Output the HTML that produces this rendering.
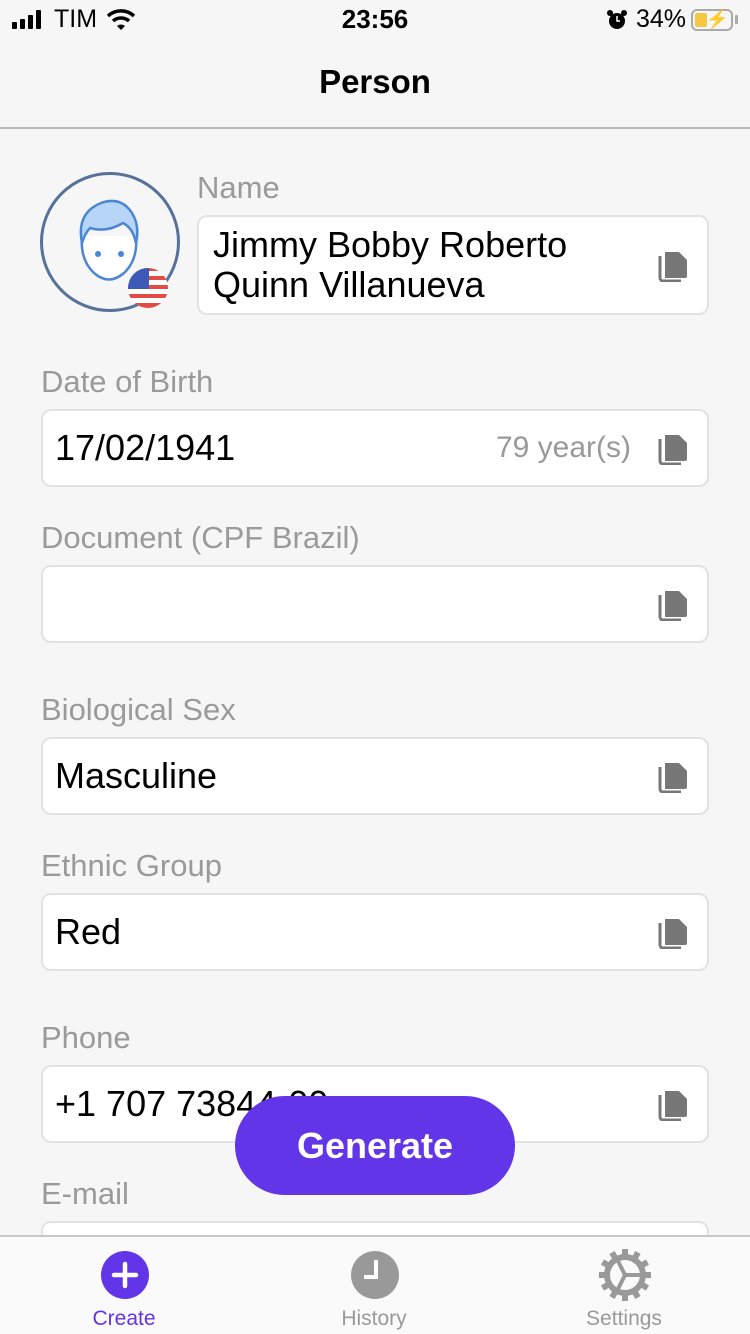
<!DOCTYPE html>
<html><head><meta charset="utf-8"><style>
*{margin:0;padding:0;box-sizing:border-box}
body{width:750px;height:1334px;background:#f6f6f6;font-family:"Liberation Sans",sans-serif;position:relative;overflow:hidden}
.abs{position:absolute}
.lbl{position:absolute;left:41px;font-size:31px;color:#9a9a9a}
.box{position:absolute;left:41px;width:668px;height:78px;background:#fff;border:2px solid #e2e2e2;border-radius:10px}
.val{position:absolute;left:12px;top:50%;transform:translateY(-50%);font-size:36px;color:#000;white-space:nowrap}
.cp{position:absolute;right:18px;top:50%;transform:translateY(-50%)}
</style></head><body>
<div class="abs" style="left:12px;top:10px;display:flex;align-items:flex-end;gap:3px;height:19px">
<div style="width:5px;height:7px;background:#000;border-radius:1px"></div>
<div style="width:5px;height:10px;background:#000;border-radius:1px"></div>
<div style="width:5px;height:14px;background:#000;border-radius:1px"></div>
<div style="width:5px;height:19px;background:#000;border-radius:1px"></div>
</div>
<div class="abs" style="left:54px;top:5px;font-size:25px">TIM</div>
<svg class="abs" style="left:106px;top:8px" width="30" height="22" viewBox="0 0 30 22"><path d="M2 8 A19 19 0 0 1 28 8" stroke="#000" stroke-width="3.5" fill="none"/><path d="M7 13 A12 12 0 0 1 23 13" stroke="#000" stroke-width="3.5" fill="none"/><path d="M11 18 L15 22 L19 18 A6 6 0 0 0 11 18Z" fill="#000"/></svg>
<div class="abs" style="left:0;width:750px;text-align:center;top:4px;font-size:26px;font-weight:bold">23:56</div>
<svg class="abs" style="left:606px;top:9px" width="22" height="22" viewBox="0 0 22 22"><circle cx="11" cy="12" r="8" fill="#000"/><circle cx="4" cy="4" r="3" fill="#000"/><circle cx="18" cy="4" r="3" fill="#000"/><path d="M11 7v5h3" stroke="#fff" stroke-width="1.5" fill="none"/></svg>
<div class="abs" style="left:636px;top:5px;font-size:25px">34%</div>
<div class="abs" style="left:691px;top:9px;width:42px;height:22px;border:2px solid #aaa;border-radius:6px"><div style="position:absolute;left:2px;top:2px;width:12px;height:14px;background:#f5c842;border-radius:2px"></div><div style="position:absolute;left:13px;top:-2px;font-size:18px;font-weight:bold">⚡</div></div>
<div class="abs" style="left:735px;top:15px;width:3px;height:9px;background:#aaa;border-radius:1px"></div>
<div class="abs" style="left:0;top:63px;width:750px;text-align:center;font-size:33px;font-weight:bold">Person</div>
<div class="abs" style="left:0;top:127px;width:750px;height:2px;background:#bdbdbd"></div>
<div class="abs" style="left:40px;top:172px;width:140px;height:140px;border:3px solid #56729a;border-radius:50%;background:#f6f6f6"></div>
<svg class="abs" style="left:76px;top:198px" width="66" height="88" viewBox="0 0 66 88">
<path d="M6 38 Q4 62 18 75 Q33 88 48 75 Q62 62 60 38" fill="#fff" stroke="#4b86d3" stroke-width="2.5"/>
<path d="M6 45 Q0 15 25 5 Q45 -2 56 15 Q64 28 60 45 Q57 30 47 25 Q30 35 14 30 Q9 35 6 45Z" fill="#b7d6f7" stroke="#4b86d3" stroke-width="2.5"/>
<circle cx="22" cy="56" r="3" fill="#4b86d3"/><circle cx="45" cy="56" r="3" fill="#4b86d3"/></svg>
<svg class="abs" style="left:127px;top:267px" width="42" height="42" viewBox="0 0 42 42"><defs><clipPath id="c"><circle cx="21" cy="21" r="20"/></clipPath></defs><g clip-path="url(#c)"><rect width="42" height="42" fill="#fff"/><rect y="0" width="42" height="4" fill="#e34b44"/><rect y="9" width="42" height="4" fill="#e34b44"/><rect y="18" width="42" height="4" fill="#e34b44"/><rect y="27" width="42" height="4" fill="#e34b44"/><rect y="36" width="42" height="5" fill="#e34b44"/><rect width="22" height="22" fill="#3d5ab8"/></g></svg>
<div class="abs" style="left:197px;top:170px;font-size:31px;color:#9a9a9a">Name</div>
<div class="box" style="left:197px;width:512px;top:215px;height:100px"><div class="val" style="line-height:40px;left:14px">Jimmy Bobby Roberto<br>Quinn Villanueva</div><svg class="cp" width="32" height="34" viewBox="0 0 32 34"><path d="M8 4h14l8 8v16a2 2 0 0 1-2 2H8z" fill="#777"/><path d="M3 8v22a3 3 0 0 0 3 3h18" stroke="#777" stroke-width="3" fill="none"/></svg></div>
<div class="lbl" style="top:364px">Date of Birth</div>
<div class="box" style="top:409px"><div class="val">17/02/1941</div><div class="abs" style="right:76px;top:50%;transform:translateY(-50%);font-size:30px;color:#999">79 year(s)</div><svg class="cp" width="32" height="34" viewBox="0 0 32 34"><path d="M8 4h14l8 8v16a2 2 0 0 1-2 2H8z" fill="#777"/><path d="M3 8v22a3 3 0 0 0 3 3h18" stroke="#777" stroke-width="3" fill="none"/></svg></div>
<div class="lbl" style="top:520px">Document (CPF Brazil)</div>
<div class="box" style="top:565px"><svg class="cp" width="32" height="34" viewBox="0 0 32 34"><path d="M8 4h14l8 8v16a2 2 0 0 1-2 2H8z" fill="#777"/><path d="M3 8v22a3 3 0 0 0 3 3h18" stroke="#777" stroke-width="3" fill="none"/></svg></div>
<div class="lbl" style="top:692px">Biological Sex</div>
<div class="box" style="top:737px"><div class="val">Masculine</div><svg class="cp" width="32" height="34" viewBox="0 0 32 34"><path d="M8 4h14l8 8v16a2 2 0 0 1-2 2H8z" fill="#777"/><path d="M3 8v22a3 3 0 0 0 3 3h18" stroke="#777" stroke-width="3" fill="none"/></svg></div>
<div class="lbl" style="top:848px">Ethnic Group</div>
<div class="box" style="top:893px"><div class="val">Red</div><svg class="cp" width="32" height="34" viewBox="0 0 32 34"><path d="M8 4h14l8 8v16a2 2 0 0 1-2 2H8z" fill="#777"/><path d="M3 8v22a3 3 0 0 0 3 3h18" stroke="#777" stroke-width="3" fill="none"/></svg></div>
<div class="lbl" style="top:1020px">Phone</div>
<div class="box" style="top:1065px"><div class="val">+1 707 73844-00</div><svg class="cp" width="32" height="34" viewBox="0 0 32 34"><path d="M8 4h14l8 8v16a2 2 0 0 1-2 2H8z" fill="#777"/><path d="M3 8v22a3 3 0 0 0 3 3h18" stroke="#777" stroke-width="3" fill="none"/></svg></div>
<div class="lbl" style="top:1176px">E-mail</div>
<div class="box" style="top:1221px"></div>
<div class="abs" style="left:235px;top:1096px;width:280px;height:99px;border-radius:50px;background:#6236e8;color:#fff;font-size:36px;font-weight:bold;text-align:center;line-height:99px">Generate</div>
<div class="abs" style="left:0;top:1235px;width:750px;height:99px;background:#fafafa;border-top:2px solid #c8c8c8"></div>
<svg class="abs" style="left:100px;top:1250px" width="50" height="50" viewBox="0 0 50 50"><circle cx="25" cy="25" r="24" fill="#6236e8"/><path d="M25 14v22M14 25h22" stroke="#fff" stroke-width="4.5" stroke-linecap="round"/></svg>
<div class="abs" style="left:74px;width:100px;text-align:center;top:1307px;font-size:21px;color:#6236e8">Create</div>
<svg class="abs" style="left:350px;top:1250px" width="50" height="50" viewBox="0 0 50 50"><circle cx="25" cy="25" r="24" fill="#999"/><path d="M26 10v17H14" stroke="#fff" stroke-width="4" fill="none"/></svg>
<div class="abs" style="left:324px;width:100px;text-align:center;top:1307px;font-size:21px;color:#999">History</div>
<svg class="abs" style="left:598px;top:1248px" width="54" height="54" viewBox="0 0 54 54"><g fill="#999"><circle cx="27" cy="27" r="21"/><g id="t"><rect x="24" y="1" width="6" height="8"/></g><use href="#t" transform="rotate(30 27 27)"/><use href="#t" transform="rotate(60 27 27)"/><use href="#t" transform="rotate(90 27 27)"/><use href="#t" transform="rotate(120 27 27)"/><use href="#t" transform="rotate(150 27 27)"/><use href="#t" transform="rotate(180 27 27)"/><use href="#t" transform="rotate(210 27 27)"/><use href="#t" transform="rotate(240 27 27)"/><use href="#t" transform="rotate(270 27 27)"/><use href="#t" transform="rotate(300 27 27)"/><use href="#t" transform="rotate(330 27 27)"/></g><circle cx="27" cy="27" r="15" fill="#fafafa"/><path d="M27 27L20 13M27 27H43M27 27L20 41" stroke="#999" stroke-width="4"/></svg>
<div class="abs" style="left:574px;width:100px;text-align:center;top:1307px;font-size:21px;color:#999">Settings</div>
</body></html>
